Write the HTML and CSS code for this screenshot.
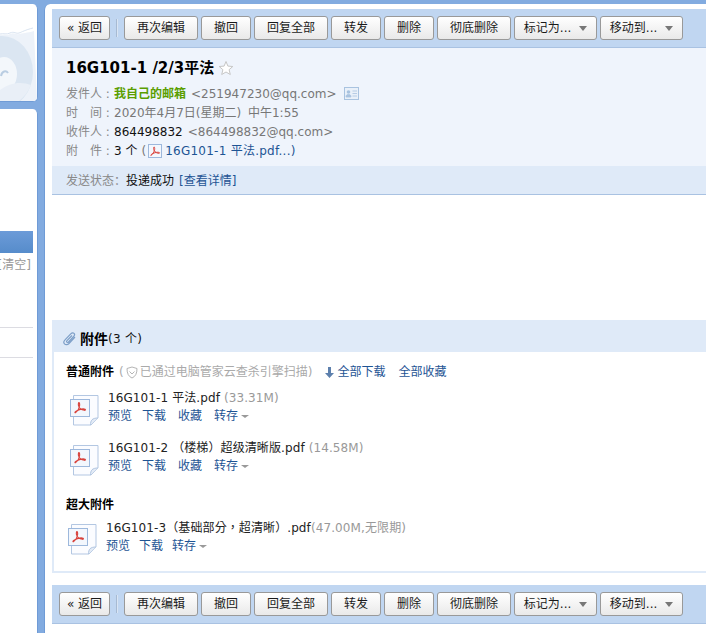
FILE: index.html
```html
<!DOCTYPE html>
<html lang="zh">
<head>
<meta charset="utf-8">
<title>16G101-1 /2/3平法</title>
<link rel="stylesheet" href="styles.css">
</head>
<body>
<svg class="defs" width="0" height="0">
  <symbol id="acro" viewBox="0 0 16 16">
    <path d="M2.500 14c2.200-1.200 4.300-4.800 5-8 .3-1.600-.1-3.500-.7-3.500s-.9 1.700-.5 3.300c.7 2.600 2.600 4.800 6.700 5.400 1.100.1 1.600-.8.800-1.200-1.600-.8-6.200-.4-10.200 2.300-1.100.8-1.800 1.300-1.100 1.700z" fill="none" stroke="#d8423c" stroke-width="1.300"/>
  </symbol>
  <symbol id="doc" viewBox="0 0 29 31">
    <path d="M3.500.5h24.500v22.500l-7 7H3.500z" fill="#fbfcff" stroke="#b3c7e2"/>
    <path d="M20.500 30c0-4.500 1.500-7 7.500-7" fill="#e3ebf6" stroke="#b3c7e2"/>
    <rect x=".5" y="4.500" width="19" height="17" fill="#f3f7fd" stroke="#9db8dc"/>
    <use href="#acro" x="3" y="5" width="14" height="15"/>
  </symbol>
</svg>

<aside class="side">
  <div class="side-top">
    <svg class="disc" viewBox="0 0 37 97" width="37" height="97">
      <path d="M0 31c4-1 6 1 10-1s6 1 9 0 8-1 15-3l3 70H0z" fill="#edf2f9"/>
      <path d="M0 30c4-1 6 1 10-1s6 1 9 0 6-3 14-5" fill="none" stroke="#d9e3f0"/>
      <ellipse cx="2" cy="68" rx="31" ry="36" fill="#dbe6f2"/>
      <ellipse cx="4" cy="70" rx="13" ry="17" fill="#f3f7fb"/>
      <path d="M1 72c1-5 5-6 7-3" fill="none" stroke="#b9cde2" stroke-width="2"/>
      <path d="M0 86c9-7 21-9 31-5-3 7-7 12-12 16H0z" fill="#e9eff7"/>
    </svg>
  </div>
  <div class="side-main">
    <div class="side-bar"></div>
    <div class="side-clear">[清空]</div>
    <div class="side-rule side-rule-a"></div>
    <div class="side-rule side-rule-b"></div>
  </div>
</aside>

<main class="main">
  <div class="toolbar">
    <button class="btn btn-back">« 返回</button>
    <span class="sep"></span>
    <button class="btn btn-4">再次编辑</button>
    <button class="btn btn-2">撤回</button>
    <button class="btn btn-4">回复全部</button>
    <button class="btn btn-2">转发</button>
    <button class="btn btn-2">删除</button>
    <button class="btn btn-4">彻底删除</button>
    <button class="btn btn-menu">标记为... <i class="caret"></i></button>
    <button class="btn btn-menu">移动到... <i class="caret"></i></button>
  </div>

  <section class="head">
    <h1 class="subject">16G101-1 /2/3平法<svg class="star" viewBox="0 0 16 16" width="16" height="16"><path d="M8 1.500l1.900 4.600 4.900.4-3.700 3.200 1.200 4.800L8 12l-4.300 2.500 1.200-4.800-3.700-3.200 4.900-.4z" fill="#fff" stroke="#c6c6c6"/></svg></h1>
    <div class="row"><span class="lbl lbl-fixed">发件人 :</span><b class="me">我自己的邮箱</b><span class="addr">&lt;251947230@qq.com&gt;</span><svg class="card" viewBox="0 0 15 13" width="15" height="13"><rect x=".5" y=".5" width="14" height="12" fill="#e9f0f9" stroke="#a9c3e0"/><circle cx="4.500" cy="5" r="1.800" fill="#a9c3e0"/><path d="M2 10c0-2 1-2.500 2.500-2.500S7 8 7 10zM8.500 4h4.500M8.500 6.500h4.500M8.500 9h4.500" fill="#a9c3e0" stroke="#a9c3e0" stroke-width=".8"/></svg></div>
    <div class="row"><span class="lbl lbl-fixed">时　间 :</span><span class="grey time">2020年4月7日(星期二) 中午1:55</span></div>
    <div class="row"><span class="lbl lbl-fixed">收件人 :</span><span class="dark">864498832</span><span class="addr">&lt;864498832@qq.com&gt;</span></div>
    <div class="row"><span class="lbl lbl-fixed">附　件 :</span><span class="dark">3 个</span><span class="grey paren">(</span><svg class="mini" viewBox="0 0 14 14" width="14" height="14"><rect x=".5" y=".5" width="13" height="13" fill="#f3f7fd" stroke="#9db8dc"/><use href="#acro" x="1" y="1" width="12" height="12"/></svg><span class="link spaced">16G101-1 平法.pdf...)</span></div>
  </section>
  <div class="status"><span class="lbl">发送状态：</span><span class="dark">投递成功</span><span class="link status-link">[查看详情]</span></div>

  <div class="body-space"></div>

  <section class="attach">
    <div class="attach-head">
      <svg class="clip" viewBox="0 0 14 14" width="14" height="14"><path d="M12 5L6 11.500c-1.500 1.500-3.500 1.500-4.500.4-1-1.100-.8-2.700.5-4l6-6.300c1-1 2.300-1 3-.3s.7 2-.3 3L5.500 10c-.6.600-1.300.6-1.700.2s-.3-1 .2-1.600l5-5.100" fill="none" stroke="#7d9fc8" stroke-width="1.200"/></svg>
      <b class="attach-title">附件</b><span class="dark spaced">(3 个)</span>
    </div>
    <div class="attach-body">
      <div class="group-title">
        <b class="strong">普通附件</b>
        <span class="scan">(<svg class="shield" viewBox="0 0 12 13" width="12" height="13"><path d="M6 1l5 1.500c0 5-1.500 8-5 9.500-3.500-1.500-5-4.500-5-9.500z" fill="none" stroke="#b5b5b5"/><path d="M3.500 5.500L6 8l2.500-2.500" fill="none" stroke="#b5b5b5"/></svg>已通过电脑管家云查杀引擎扫描)</span>
        <span class="link all"><svg class="down" viewBox="0 0 9 11" width="9" height="11"><path d="M3 0h3v6h3l-4.500 5L0 6h3z" fill="#5d80ad"/></svg>全部下载</span>
        <span class="link all">全部收藏</span>
      </div>

      <div class="file">
        <svg class="doc" width="29" height="31"><use href="#doc"/></svg>
        <div class="file-info">
          <div class="fname" lang="zh-TW">16G101-1 平法.pdf <span class="size">(33.31M)</span></div>
          <div class="ops"><span class="link first">预览</span><span class="link">下载</span><span class="link">收藏</span><span class="link">转存<i class="caret caret-sm"></i></span></div>
        </div>
      </div>
      <div class="file">
        <svg class="doc" width="29" height="31"><use href="#doc"/></svg>
        <div class="file-info">
          <div class="fname" lang="zh-TW">16G101-2 （楼梯）超级清晰版.pdf <span class="size">(14.58M)</span></div>
          <div class="ops"><span class="link first">预览</span><span class="link">下载</span><span class="link">收藏</span><span class="link">转存<i class="caret caret-sm"></i></span></div>
        </div>
      </div>

      <div class="group-title group-big"><b class="strong">超大附件</b></div>
      <div class="file file-big">
        <svg class="doc" width="29" height="31"><use href="#doc"/></svg>
        <div class="file-info">
          <div class="fname" lang="zh-TW">16G101-3（基础部分，超清晰）.pdf<span class="size">(47.00M,无限期)</span></div>
          <div class="ops ops-big"><span class="link">预览</span><span class="link">下载</span><span class="link">转存<i class="caret caret-sm"></i></span></div>
        </div>
      </div>
    </div>
  </section>

  <div class="toolbar toolbar-bottom">
    <button class="btn btn-back">« 返回</button>
    <span class="sep"></span>
    <button class="btn btn-4">再次编辑</button>
    <button class="btn btn-2">撤回</button>
    <button class="btn btn-4">回复全部</button>
    <button class="btn btn-2">转发</button>
    <button class="btn btn-2">删除</button>
    <button class="btn btn-4">彻底删除</button>
    <button class="btn btn-menu">标记为... <i class="caret"></i></button>
    <button class="btn btn-menu">移动到... <i class="caret"></i></button>
  </div>
</main>
</body>
</html>
```
FILE: styles.css
```css
* { box-sizing: border-box; }
html, body { height: 100%; }
body {
  margin: 0;
  height: 633px;
  overflow: hidden;
  display: flex;
  gap: 6px;
  padding-top: 4px;
  background: #82abe0;
  font: 12px/18px "DejaVu Sans", "Noto Sans CJK SC", sans-serif;
  color: #000;
}
.defs { position: absolute; }

.side { width: 38px; flex: none; display: flex; flex-direction: column; gap: 7px; }
.side-top { height: 98px; flex: none; background: #fff; border: solid #6f9bd6; border-width: 0 1px 1px 0; border-radius: 0 5px 5px 0; overflow: hidden; }
.disc { display: block; }
.side-main { flex: 1; background: #fff; border-radius: 0 5px 0 0; border-right: 1px solid #6f9bd6; padding-top: 122px; }
.side-bar { width: 33px; height: 22px; background: linear-gradient(#6c9bd8, #568ccb); }
.side-clear { width: 31px; margin-top: 2px; color: #999; white-space: nowrap; direction: rtl; overflow: hidden; padding-top: 1px; }
.side-rule { width: 33px; height: 1px; background: #dcdce2; }
.side-rule-a { margin-top: 53px; }
.side-rule-b { margin-top: 29px; }

.main {
  flex: 1;
  min-width: 0;
  background: #fff;
  border-left: 1px solid #6f9bd6;
  border-radius: 6px 0 0 0;
  padding: 5px 0 0 7px;
  display: flex;
  flex-direction: column;
}

.toolbar {
  height: 39px;
  flex: none;
  background: #c0d6f1;
  border-bottom: 1px solid #a9c2e2;
  display: flex;
  align-items: flex-start;
  padding: 7px 0 0 7px;
  gap: 3px;
}
.btn {
  height: 24px;
  padding: 0;
  border: 1px solid #999;
  border-radius: 3px;
  background: linear-gradient(#fff, #e9e9e9);
  font: 12px/22px "DejaVu Sans", "Noto Sans CJK SC", sans-serif;
  color: #1a1a1a;
  white-space: nowrap;
}
.btn-back { width: 51px; }
.btn-4 { width: 74px; }
.btn-2 { width: 50px; }
.btn-menu { width: 83px; }
.sep { width: 2px; height: 18px; margin: 3px 3px 0 3px; background: #d9e5f4; border-left: 1px solid #a7bad2; }
.caret { display: inline-block; width: 0; height: 0; margin-left: 4px; vertical-align: 1px; border: 4px solid transparent; border-top: 5px solid #777; border-bottom: 0; }
.caret-sm { border-width: 3px 4px 0; border-top-color: #999; vertical-align: 2px; margin-left: 3px; }

.head { height: 118px; flex: none; background: #eff4fc; padding: 10px 0 0 14px; }
.subject { margin: 0 0 6px; display: flex; align-items: center; font: bold 15px/20px "DejaVu Sans", "Noto Sans CJK SC", sans-serif; }
.star { margin-left: 4px; }
.row { height: 19px; display: flex; align-items: center; white-space: nowrap; }
.lbl { color: #888; }
.lbl-fixed { width: 48px; flex: none; }
.grey { color: #777; }
.time { word-spacing: 3px; }
.dark { color: #111; }
.me { color: #5a9e00; font-weight: bold; }
.addr { color: #777; margin-left: 5px; }
.card { margin-left: 7px; }
.paren { margin-left: 4px; }
.mini { margin: 0 3px 0 2px; }
.link { color: #1e5494; }
.spaced { letter-spacing: .25px; }

.status { height: 29px; flex: none; background: #dfeaf8; border-bottom: 1px solid #a9c2e2; padding: 6px 0 0 14px; white-space: nowrap; }
.status-link { margin-left: 5px; }

.body-space { height: 125px; flex: none; }

.attach { height: 253px; flex: none; background: #dfeaf8; padding: 0 0 2px 2px; }
.attach-head { height: 32px; display: flex; align-items: center; padding: 5px 0 0 9px; }
.clip { margin-right: 3px; }
.attach-title { font-size: 14px; }
.attach-body { height: 219px; background: #fff; padding: 10px 0 0 12px; }
.group-title { height: 20px; display: flex; align-items: center; white-space: nowrap; }
.strong { font-weight: bold; }
.scan { color: #aaa; margin-left: 5px; display: flex; align-items: center; }
.shield { margin: 0 2px; }
.all { margin-left: 13px; display: flex; align-items: center; }
.down { margin-right: 3px; }

.file { height: 50px; display: flex; padding-left: 4px; }
.doc { flex: none; margin: 13px 9px 0 0; }
.file-info { padding-top: 7px; }
.fname {
  height: 18px;
  white-space: nowrap;
  color: #222;
  letter-spacing: .1px;
  font-family: "DejaVu Sans", "Noto Sans CJK TC", sans-serif;
}
.size { color: #999; }
.ops { display: flex; gap: 12px; white-space: nowrap; }
.first { margin-right: -2px; }
.group-big { margin-top: 13px; }
.file-big { padding-left: 2px; }
.file-big .doc { margin-top: 9px; }
.file-big .file-info { padding-top: 4px; }
.ops-big { gap: 9px; }

.toolbar-bottom { margin-top: 12px; }
```
